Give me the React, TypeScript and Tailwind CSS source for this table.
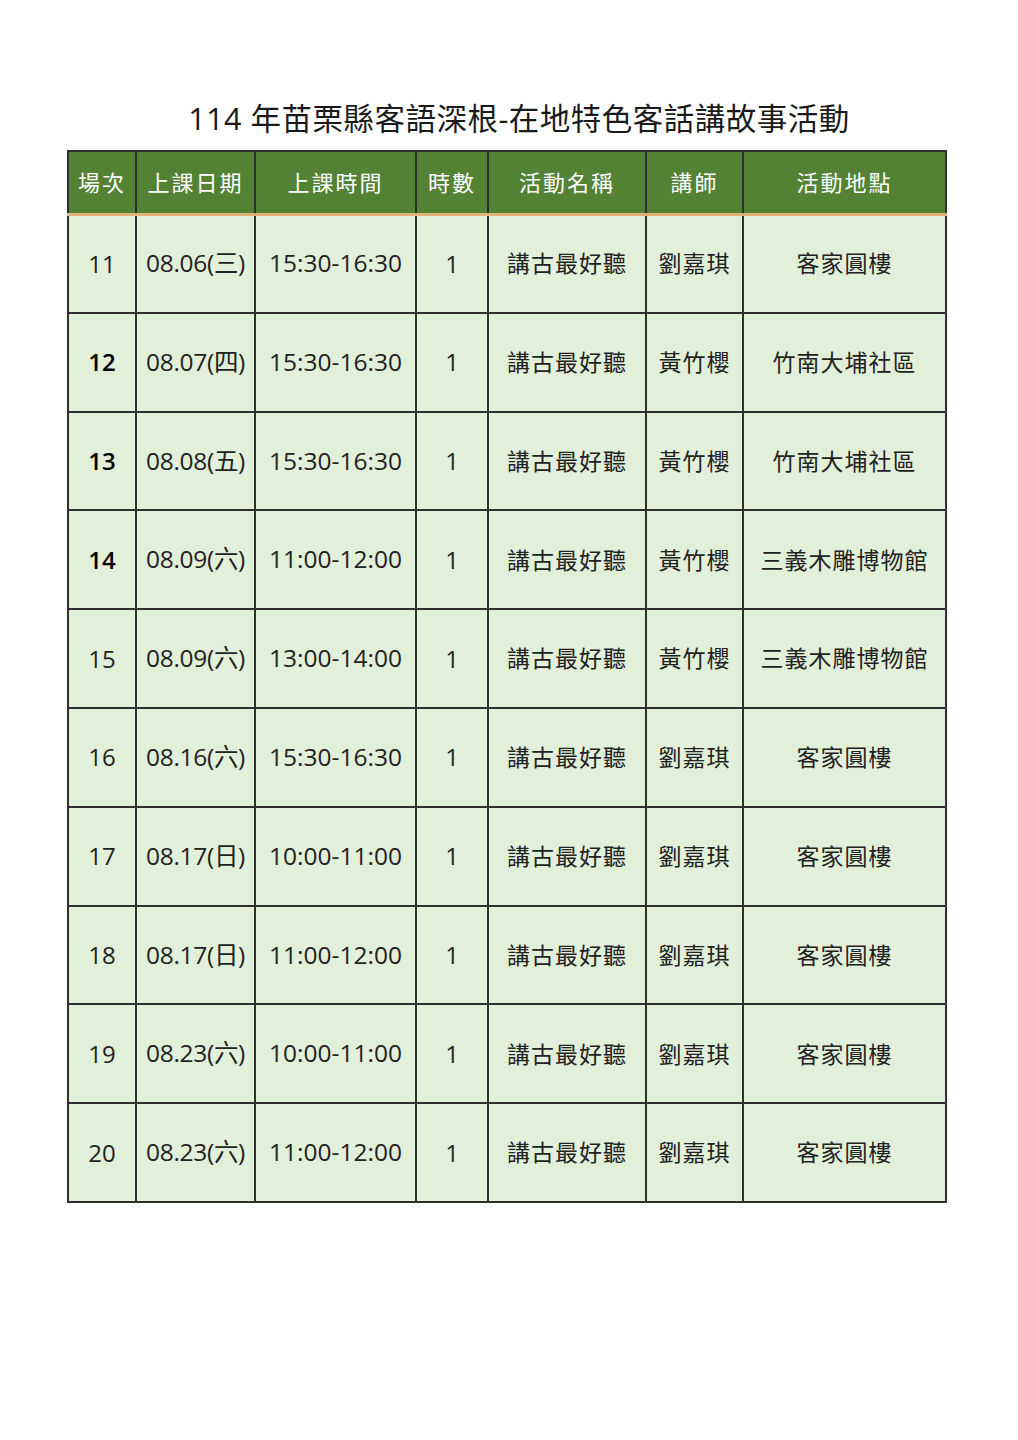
import React from 'react';

type Row = {
  no: string;
  date: string;
  time: string;
  hours: string;
  name: string;
  teacher: string;
  place: string;
  bold?: boolean;
};

const rows: Row[] = [
  { no: '11', date: '08.06(三)', time: '15:30-16:30', hours: '1', name: '講古最好聽', teacher: '劉嘉琪', place: '客家圓樓' },
  { no: '12', date: '08.07(四)', time: '15:30-16:30', hours: '1', name: '講古最好聽', teacher: '黃竹櫻', place: '竹南大埔社區', bold: true },
  { no: '13', date: '08.08(五)', time: '15:30-16:30', hours: '1', name: '講古最好聽', teacher: '黃竹櫻', place: '竹南大埔社區', bold: true },
  { no: '14', date: '08.09(六)', time: '11:00-12:00', hours: '1', name: '講古最好聽', teacher: '黃竹櫻', place: '三義木雕博物館', bold: true },
  { no: '15', date: '08.09(六)', time: '13:00-14:00', hours: '1', name: '講古最好聽', teacher: '黃竹櫻', place: '三義木雕博物館' },
  { no: '16', date: '08.16(六)', time: '15:30-16:30', hours: '1', name: '講古最好聽', teacher: '劉嘉琪', place: '客家圓樓' },
  { no: '17', date: '08.17(日)', time: '10:00-11:00', hours: '1', name: '講古最好聽', teacher: '劉嘉琪', place: '客家圓樓' },
  { no: '18', date: '08.17(日)', time: '11:00-12:00', hours: '1', name: '講古最好聽', teacher: '劉嘉琪', place: '客家圓樓' },
  { no: '19', date: '08.23(六)', time: '10:00-11:00', hours: '1', name: '講古最好聽', teacher: '劉嘉琪', place: '客家圓樓' },
  { no: '20', date: '08.23(六)', time: '11:00-12:00', hours: '1', name: '講古最好聽', teacher: '劉嘉琪', place: '客家圓樓' },
];

const headers = ['場次', '上課日期', '上課時間', '時數', '活動名稱', '講師', '活動地點'];
const widths = [68, 119, 161, 72, 158, 97, 203];

export default function App() {
  return (
    <div
      className="w-[1018px] h-[1440px] bg-white text-[#222]"
      style={{ fontFamily: '"Open Sans", "Noto Sans CJK TC", sans-serif' }}
    >
      {/* 標題 */}
      <h1 className="pt-[97px] pl-[20px] h-[150px] text-center text-[30.5px] leading-[42px] font-normal tracking-[0.5px] text-[#1a1a1a]">
        114 年苗栗縣客語深根-在地特色客話講故事活動
      </h1>

      {/* 場次表 */}
      <table className="ml-[67px] w-[878px] table-fixed border-collapse border-2 border-[#2f2f2f]">
        <colgroup>
          {widths.map((w, i) => (
            <col key={i} style={{ width: w }} />
          ))}
        </colgroup>
        <thead>
          <tr className="h-[63px] bg-[#548235] border-b-[3px] border-b-[#e0b27a]">
            {headers.map((h) => (
              <th
                key={h}
                className="border-x-2 border-[#2f2f2f] p-0 text-center text-[22px] font-normal text-white tracking-[2px]"
              >
                {h}
              </th>
            ))}
          </tr>
        </thead>
        <tbody>
          {rows.map((r) => (
            <tr key={r.no} className="h-[98.8px] bg-[#e2efd9]">
              <td className={`border-2 border-[#2f2f2f] p-0 text-center text-[24px] ${r.bold ? 'font-semibold text-black' : ''}`}>
                {r.no}
              </td>
              <td className="border-2 border-[#2f2f2f] p-0 text-center text-[24.5px] tracking-[-0.3px]">{r.date}</td>
              <td className="border-2 border-[#2f2f2f] p-0 text-center text-[24.5px]">{r.time}</td>
              <td className="border-2 border-[#2f2f2f] p-0 text-center text-[24px]">{r.hours}</td>
              <td className="border-2 border-[#2f2f2f] p-0 text-center text-[23px] tracking-[1px]">{r.name}</td>
              <td className="border-2 border-[#2f2f2f] p-0 text-center text-[23px] tracking-[1px]">{r.teacher}</td>
              <td className="border-2 border-[#2f2f2f] p-0 text-center text-[23px] tracking-[1px]">{r.place}</td>
            </tr>
          ))}
        </tbody>
      </table>
    </div>
  );
}
